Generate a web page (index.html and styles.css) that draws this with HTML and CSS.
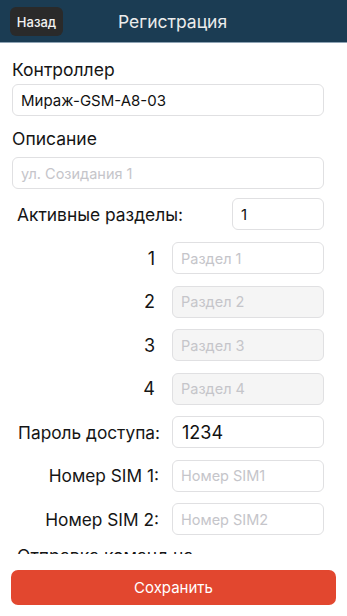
FILE: index.html
```html
<!DOCTYPE html>
<html lang="ru">
<head>
<meta charset="utf-8">
<title>Регистрация</title>
<link rel="stylesheet" href="styles.css">
</head>
<body>
<div class="app">
  <header class="topbar">
    <button class="back">Назад</button>
    <h1 class="title">Регистрация</h1>
  </header>
  <main class="content">
    <div class="label first">Контроллер</div>
    <div class="field">Мираж-GSM-A8-03</div>
    <div class="label second">Описание</div>
    <div class="field placeholder">ул. Созидания 1</div>

    <div class="active-row">
      <span class="active-label">Активные разделы:</span>
      <div class="field small">1</div>
    </div>

    <div class="grid">
      <span class="num">1</span><div class="field placeholder">Раздел 1</div>
      <span class="num">2</span><div class="field placeholder disabled">Раздел 2</div>
      <span class="num">3</span><div class="field placeholder disabled">Раздел 3</div>
      <span class="num">4</span><div class="field placeholder disabled">Раздел 4</div>
      <span class="rlabel">Пароль доступа:</span><div class="field big">1234</div>
      <span class="rlabel sim">Номер SIM 1:</span><div class="field placeholder">Номер SIM1</div>
      <span class="rlabel sim">Номер SIM 2:</span><div class="field placeholder">Номер SIM2</div>
    </div>
    <div class="label cut">Отправка команд на</div>
  </main>
  <footer class="footer">
    <button class="save">Сохранить</button>
  </footer>
</div>
</body>
</html>
```
FILE: styles.css
```css
* { box-sizing: border-box; }
html, body { margin: 0; padding: 0; background: #fff; }
body { font-family: Inter, "Liberation Sans", sans-serif; color: #151515; }
.app { height: 616px; display: flex; flex-direction: column; overflow: hidden; }

.topbar {
  height: 43px; flex: none;
  background: #1b3c53;
  border-bottom: 1px solid #8ea3b4;
  display: flex; align-items: center;
  padding-left: 10px;
}
.back {
  height: 29px; width: 53px;
  background: #2a2a2a; color: #f2f2f2;
  border: none; border-radius: 6px;
  font: 500 13px Inter, "Liberation Sans", sans-serif;
  padding: 0; margin-top: 1px;
}
.title {
  margin: 0 0 0 55px;
  font: 400 17.5px Inter, "Liberation Sans", sans-serif;
  color: #ececec;
}

.content { flex: 1; overflow: hidden; padding: 16px 23px 0 12px; }
.label { font-size: 17.5px; line-height: 22px; }
.label.first { margin-bottom: 3px; }
.label.second { margin: 12px 0 7px; }
.label.cut { margin: 10px 0 0 5px; }

.field {
  height: 32px;
  border: 1px solid #e0e0e2;
  border-radius: 6px;
  padding: 0 8px;
  display: flex; align-items: center;
  font-size: 15px;
  color: #111;
  background: #fff;
}
.field.placeholder { color: #c5c5ca; font-size: 14.5px; }
.field.disabled { background: #f5f5f5; }
.field.big { font-size: 18px; padding-left: 9px; }

.active-row {
  display: flex; align-items: center; justify-content: space-between;
  margin-top: 9px; padding-left: 5px;
}
.active-label { font-size: 17.4px; }
.field.small { width: 92px; }

.grid {
  display: grid;
  grid-template-columns: 148px 152px;
  column-gap: 12px;
  row-gap: 11.5px;
  margin-top: 12px;
  align-items: center;
}
.num { text-align: right; font-size: 18px; padding-right: 5px; }
.rlabel { text-align: right; font-size: 17.3px; white-space: nowrap; }
.rlabel.sim { padding-right: 1px; }

.footer { height: 62px; flex: none; background: #fff; padding: 16px 11px 0; }
.save {
  width: 100%; height: 35px;
  background: #e2472f; color: #fff;
  border: none; border-radius: 7px;
  font: 400 15px Inter, "Liberation Sans", sans-serif;
}
```
